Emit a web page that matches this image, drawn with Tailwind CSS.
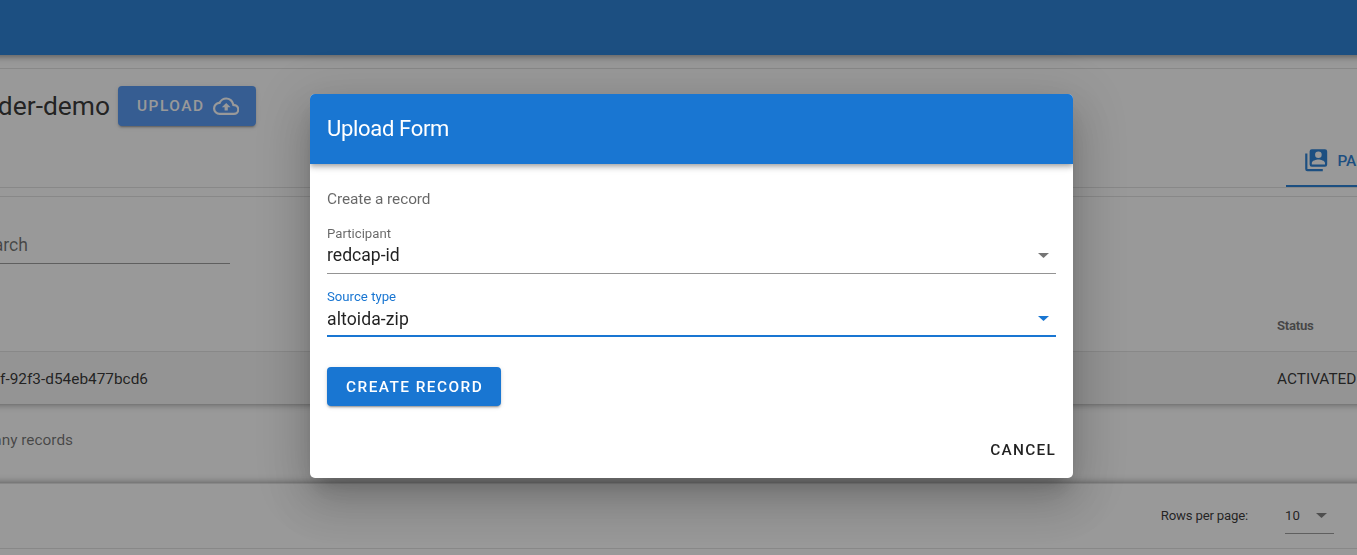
<!DOCTYPE html>
<html lang="en">
<head>
<meta charset="utf-8">
<title>Upload Form</title>
<script src="https://cdn.jsdelivr.net/npm/@tailwindcss/browser@4"></script>
</head>
<body class="h-[555px] overflow-hidden bg-white font-['Roboto',sans-serif] text-black/87">
<div class="flex h-[555px] w-[1357px] flex-col overflow-hidden">
  <header class="-mx-4 h-[55px] shrink-0 bg-[#1976d2] shadow-[0_2px_4px_-1px_rgba(0,0,0,.2),0_4px_5px_rgba(0,0,0,.14),0_1px_10px_rgba(0,0,0,.12)]"></header>
  <section class="mt-[13px] flex h-[120px] shrink-0 flex-col justify-between border-y border-black/12">
    <div class="flex pt-[17px]">
      <div class="flex w-[110px] justify-end text-[26.4px] leading-10 whitespace-nowrap">der-demo</div>
      <button class="ml-2 flex h-10 w-[138px] items-center rounded-[4px] bg-[#4890f2] pl-[19px] text-[15.4px] font-medium tracking-[1.55px] text-white shadow-[0_3px_1px_-2px_rgba(0,0,0,.2),0_2px_2px_rgba(0,0,0,.14),0_1px_5px_rgba(0,0,0,.12)]"><span class="pt-px">UPLOAD</span>
        <svg class="ml-[8px] size-[26.4px]" viewBox="0 0 24 24" fill="currentColor"><path d="M19.35 10.04A7.49 7.49 0 0 0 12 4C9.11 4 6.6 5.64 5.35 8.04A5.994 5.994 0 0 0 0 14a6 6 0 0 0 6 6h13a5 5 0 0 0 5-5c0-2.64-2.05-4.78-4.65-4.96M19 18H6a4 4 0 0 1-4-4c0-2.05 1.53-3.76 3.56-3.97l1.07-.11.5-.95A5.469 5.469 0 0 1 12 6c2.62 0 4.88 1.86 5.39 4.43l.3 1.5 1.53.11A2.98 2.98 0 0 1 22 15a3 3 0 0 1-3 3M8 13h2.55v3h2.9v-3H16l-4-4z"/></svg>
      </button>
    </div>
    <div class="flex justify-end">
      <div class="flex h-[53px] w-[71px] items-center gap-[8px] overflow-hidden border-b-2 border-[#1976d2] pt-px pl-[17px] text-[15.4px] font-medium whitespace-nowrap text-[#1976d2]">
        <svg class="size-[26.4px] shrink-0" viewBox="0 0 24 24" fill="currentColor"><path d="M4 6H2v14a2 2 0 0 0 2 2h14v-2H4zm16-4H8a2 2 0 0 0-2 2v12a2 2 0 0 0 2 2h12a2 2 0 0 0 2-2V4a2 2 0 0 0-2-2m-6 2a3 3 0 0 1 3 3 3 3 0 0 1-3 3 3 3 0 0 1-3-3 3 3 0 0 1 3-3m6 12H8v-1.500c0-2 4-3.100 6-3.100s6 1.100 6 3.100z"/></svg>
        <span class="pt-[3px]">PA</span>
      </div>
    </div>
  </section>
  <main class="mt-2 flex shrink-0 flex-col border-t border-black/12">
    <div class="flex h-[67px] w-[230px] items-end border-b border-black/42">
      <div class="flex h-[37px] w-7 justify-end text-[17.6px] leading-[38px] whitespace-nowrap text-black/60">Search</div>
    </div>
    <div class="flex h-[88px] items-end border-b border-black/12">
      <div class="h-[52px] pl-[1277px] text-[13.2px] leading-[54px] font-bold tracking-[-.3px] text-black/60">Status</div>
    </div>
    <div class="flex h-[52px] bg-[#f5f5f5] text-[15.4px] leading-[54px] whitespace-nowrap">
      <div class="flex w-[148px] justify-end">f-92f3-d54eb477bcd6</div>
      <div class="ml-[1129px]">ACTIVATED</div>
    </div>
    <div class="-mx-4 h-[79px] px-4 text-[15.4px] leading-[72px] whitespace-nowrap text-black/60 shadow-[inset_0_4px_8px_-5px_rgba(50,50,50,.75),inset_0_-4px_8px_-5px_rgba(50,50,50,.75)]">
      <div class="flex w-[73px] justify-end">any records</div>
    </div>
    <div class="flex h-[66px] justify-end border-y border-black/12 pr-[23px] text-[13.2px] leading-[63px]">
      <span class="tracking-[-.2px]">Rows per page:</span>
      <div class="ml-[37px] flex h-[50px] w-[49px] justify-between border-b border-black/42 pr-[7px]">
        <span>10</span>
        <svg class="mt-[29px] h-[5px] w-[11px]" viewBox="0 0 11 5" fill="#000" fill-opacity=".54"><path d="M0 0h11L5.500 5z"/></svg>
      </div>
    </div>
  </main>
</div>

<div class="fixed inset-0 bg-[#212121]/46"></div>

<div class="fixed inset-0 flex items-start justify-center pt-[94px] pl-[26px]">
  <div class="flex h-[384px] w-[763px] flex-col overflow-hidden rounded-[5px] bg-white shadow-[0_12px_17px_-8px_rgba(0,0,0,.2),0_26px_42px_3px_rgba(0,0,0,.14),0_10px_51px_9px_rgba(0,0,0,.12)]">
    <div class="h-[70px] shrink-0 bg-[#1976d2] pl-[17px] text-[22px] leading-[69px] tracking-[-.32px] text-white shadow-[0_2px_4px_-1px_rgba(0,0,0,.2),0_4px_5px_rgba(0,0,0,.14),0_1px_10px_rgba(0,0,0,.12)]">Upload Form</div>
    <div class="flex flex-col px-[17px]">
      <div class="mt-[23px] h-6 text-[15.4px] leading-6 tracking-[-.08px] text-black/60">Create a record</div>
      <div class="mt-[14px] flex h-[49px] items-end justify-between border-b border-black/42 pr-[7px]">
        <div class="h-[47px]">
          <div class="h-4 text-[13.2px] leading-4 text-black/60">Participant</div>
          <div class="text-[17.6px] leading-[27px]">redcap-id</div>
        </div>
        <svg class="mb-[15px] h-[5px] w-[11px]" viewBox="0 0 11 5" fill="#000" fill-opacity=".54"><path d="M0 0h11L5.500 5z"/></svg>
      </div>
      <div class="mt-[14px] flex h-[49px] items-end justify-between border-b-2 border-[#1976d2] pr-[7px]">
        <div class="h-[46px]">
          <div class="h-4 text-[13.2px] leading-4 text-[#1976d2]">Source type</div>
          <div class="text-[17.6px] leading-[28px] tracking-[.08px]">altoida-zip</div>
        </div>
        <svg class="mb-[14px] h-[5px] w-[11px]" viewBox="0 0 11 5" fill="#1976d2"><path d="M0 0h11L5.500 5z"/></svg>
      </div>
      <button class="mt-[30px] h-[39px] w-[174px] rounded-[4px] bg-[#1976d2] pl-[19px] text-left text-[15.4px] leading-[41px] font-medium tracking-[1.45px] text-white shadow-[0_3px_1px_-2px_rgba(0,0,0,.2),0_2px_2px_rgba(0,0,0,.14),0_1px_5px_rgba(0,0,0,.12)]">CREATE RECORD</button>
      <button class="mt-[24px] self-end text-[15.4px] leading-10 font-medium tracking-[1.25px]">CANCEL</button>
    </div>
  </div>
</div>
</body>
</html>
